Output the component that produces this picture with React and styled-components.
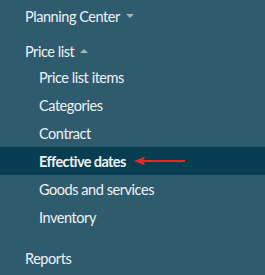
import React from "react";
import styled, { createGlobalStyle } from "styled-components";

const Global = createGlobalStyle`
  html, body { margin: 0; padding: 0; background: #2f5b6f; }
  body { font-family: Lato, "Open Sans", "Liberation Sans", sans-serif; }
`;

const Nav = styled.nav`
  width: 265px;
  height: 275px;
  background: #2f5b6f;
  display: flex;
  flex-direction: column;
  padding-top: 4px;
  box-sizing: border-box;
  overflow: hidden;
`;

const Group = styled.div`
  display: flex;
  flex-direction: column;
  margin-bottom: ${(p) => p.$gap || 0}px;
`;

const Heading = styled.div`
  display: flex;
  align-items: center;
  gap: 6px;
  height: 24px;
  padding-left: 25px;
  color: #eef3f5;
  font-size: 14.5px;
  letter-spacing: -0.45px;
`;

const Caret = styled.span`
  width: 0;
  height: 0;
  border-left: 4px solid transparent;
  border-right: 4px solid transparent;
  ${(p) =>
    p.$up
      ? "border-bottom: 4px solid #9fb3bd;"
      : "border-top: 4px solid #9fb3bd;"}
`;

const Item = styled.div`
  display: flex;
  align-items: center;
  gap: 8px;
  height: 28px;
  padding-left: 39px;
  color: #eef3f5;
  font-size: 14.5px;
  letter-spacing: ${(p) => (p.$active ? "-0.6px" : "-0.45px")};
  font-weight: ${(p) => (p.$active ? 700 : 400)};
  background: ${(p) => (p.$active ? "#063d50" : "transparent")};
`;

const Arrow = () => (
  <svg width="51" height="10" viewBox="0 0 51 10">
    <line x1="6" y1="5" x2="51" y2="5" stroke="#e8262a" strokeWidth="2" />
    <polygon points="0,5 11,0.5 9,5 11,9.5" fill="#e8262a" />
  </svg>
);

const items = [
  "Price list items",
  "Categories",
  "Contract",
  "Effective dates",
  "Goods and services",
  "Inventory",
];

export default function App() {
  return (
    <>
      <Global />
      <Nav>
        <Group $gap={11}>
          <Heading>
            Planning Center <Caret />
          </Heading>
        </Group>
        <Group $gap={15}>
          <Heading>
            Price list <Caret $up />
          </Heading>
          {items.map((t) => (
            <Item key={t} $active={t === "Effective dates"}>
              {t}
              {t === "Effective dates" && <Arrow />}
            </Item>
          ))}
        </Group>
        <Group>
          <Heading>Reports</Heading>
        </Group>
      </Nav>
    </>
  );
}
